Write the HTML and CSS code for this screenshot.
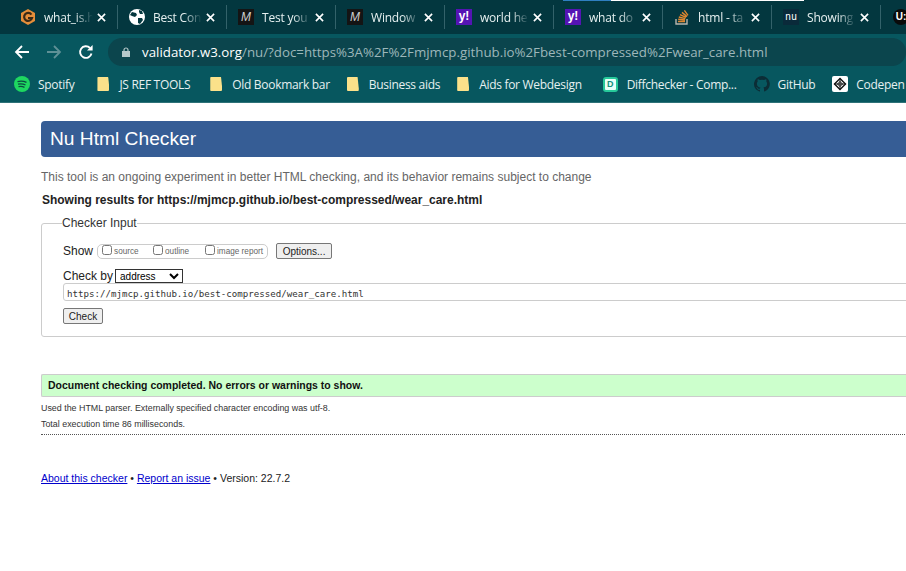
FILE: index.html
```html
<!DOCTYPE html>
<html lang="en">
<head>
  <meta charset="UTF-8">
  <title>Showing results for https://mjmcp.github.io/best-compressed/wear_care.html - Nu Html Checker</title>
  <link rel="stylesheet" href="styles.css">
</head>
<body>
  <header class="chrome">
    <div class="tabs">
      <div class="progress"><span class="progress-blue"></span><span class="progress-white"></span></div>
      <div class="tab">
        <svg class="fav" viewBox="0 0 16 16"><path d="M8 0l7 4v8l-7 4-7-4V4z" fill="#e58e3a"/><path d="M11.400 5.600A4 4 0 1 0 12 9H8" fill="none" stroke="#3a2a16" stroke-width="2.200"/></svg>
        <span class="tab-title">what_is.h</span>
        <svg class="tab-x" viewBox="0 0 10 10"><path d="M1 1l8 8M9 1l-8 8"/></svg>
      </div>
      <div class="tab">
        <svg class="fav" viewBox="0 0 16 16"><circle cx="8" cy="8" r="8" fill="#fff"/><path d="M3 3l4 1 1 2-2 2-3-1-2-1zM9 9l4 0 1 2-3 4-2-1zM10 1l3 1 1 3-3 0-1-2z" fill="#04383f"/></svg>
        <span class="tab-title">Best Con</span>
        <svg class="tab-x" viewBox="0 0 10 10"><path d="M1 1l8 8M9 1l-8 8"/></svg>
      </div>
      <div class="tab">
        <span class="fav fav-m">M</span>
        <span class="tab-title">Test you</span>
        <svg class="tab-x" viewBox="0 0 10 10"><path d="M1 1l8 8M9 1l-8 8"/></svg>
      </div>
      <div class="tab">
        <span class="fav fav-m">M</span>
        <span class="tab-title">Window</span>
        <svg class="tab-x" viewBox="0 0 10 10"><path d="M1 1l8 8M9 1l-8 8"/></svg>
      </div>
      <div class="tab">
        <span class="fav fav-y">y!</span>
        <span class="tab-title">world he</span>
        <svg class="tab-x" viewBox="0 0 10 10"><path d="M1 1l8 8M9 1l-8 8"/></svg>
      </div>
      <div class="tab">
        <span class="fav fav-y">y!</span>
        <span class="tab-title">what do</span>
        <svg class="tab-x" viewBox="0 0 10 10"><path d="M1 1l8 8M9 1l-8 8"/></svg>
      </div>
      <div class="tab">
        <svg class="fav" viewBox="0 0 16 16"><path d="M2 10v5h11v-5" fill="none" stroke="#b8b6ae" stroke-width="1.400"/><path d="M4 12.500h7M4.200 10.300l6.800.7M4.800 8l6.600 1.600M6 5.600l6 2.800M8 3.400l5 4.200M10.400 1.400l3.600 5" fill="none" stroke="#e0872f" stroke-width="1.400"/></svg>
        <span class="tab-title">html - ta</span>
        <svg class="tab-x" viewBox="0 0 10 10"><path d="M1 1l8 8M9 1l-8 8"/></svg>
      </div>
      <div class="tab">
        <span class="fav fav-nu">nu</span>
        <span class="tab-title">Showing</span>
        <svg class="tab-x" viewBox="0 0 10 10"><path d="M1 1l8 8M9 1l-8 8"/></svg>
      </div>
      <div class="tab tab-last">
        <span class="fav fav-u">U:</span>
      </div>
    </div>

    <div class="toolbar">
      <svg class="nav" viewBox="0 0 16 16"><path d="M15 8H2M8 2L2 8l6 6" fill="none" stroke="#fff" stroke-width="1.800"/></svg>
      <svg class="nav" viewBox="0 0 16 16"><path d="M1 8h13M8 2l6 6-6 6" fill="none" stroke="#5f9096" stroke-width="1.800"/></svg>
      <svg class="nav" viewBox="0 0 16 16"><path d="M13.500 9.500A5.800 5.800 0 1 1 12 4" fill="none" stroke="#fff" stroke-width="1.900"/><path d="M9 6.600h5.600V1z" fill="#fff"/></svg>
      <div class="omnibox">
        <svg class="lock" viewBox="0 0 8 10"><path d="M0 4h8v6H0z" fill="#b5c7c9"/><path d="M2 4.500V3a2 2 0 0 1 4 0v1.500" fill="none" stroke="#b5c7c9" stroke-width="1.200"/></svg>
        <span class="url"><b>validator.w3.org</b>/nu/?doc=https%3A%2F%2Fmjmcp.github.io%2Fbest-compressed%2Fwear_care.html</span>
      </div>
    </div>

    <nav class="bookmarks">
      <span class="mark mark-first"><svg class="fav" viewBox="0 0 16 16"><circle cx="8" cy="8" r="8" fill="#1ed760"/><path d="M3.500 5.600c3-.8 6.200-.6 9 .8M4 8.200c2.600-.6 5.200-.4 7.500.8M4.500 10.700c2.100-.5 4.200-.3 6 .7" fill="none" stroke="#0b4a40" stroke-width="1.300"/></svg>Spotify</span>
      <span class="mark mark-js"><span class="folder"></span>JS REF TOOLS</span>
      <span class="mark mark-old"><span class="folder"></span>Old Bookmark bar</span>
      <span class="mark"><span class="folder"></span>Business aids</span>
      <span class="mark"><span class="folder"></span>Aids for Webdesign</span>
      <span class="mark mark-diff"><span class="fav fav-d">D</span>Diffchecker - Comp...</span>
      <span class="mark"><svg class="fav" viewBox="0 0 16 16"><path d="M8 0a8 8 0 0 0-2.500 15.600c.4.100.500-.200.500-.400v-1.400c-2.200.500-2.700-1-2.700-1-.4-.900-.9-1.200-.9-1.200-.7-.500.100-.500.100-.500.800.100 1.200.800 1.200.800.700 1.200 1.900.900 2.300.700.100-.500.300-.900.500-1.100-1.800-.200-3.600-.900-3.600-4 0-.900.300-1.600.800-2.100-.100-.200-.4-1 .100-2.100 0 0 .7-.200 2.200.800a7.600 7.600 0 0 1 4 0c1.500-1 2.200-.800 2.200-.800.400 1.100.200 1.900.100 2.100.500.600.800 1.300.800 2.100 0 3.100-1.900 3.700-3.700 3.900.300.300.600.800.600 1.500v2.200c0 .200.100.500.600.400A8 8 0 0 0 8 0z" fill="#0c2d36"/></svg>GitHub</span>
      <span class="mark"><svg class="fav" viewBox="0 0 16 16"><rect width="16" height="16" rx="2" fill="#fff"/><path d="M8 2.500L13.500 8 8 13.500 2.500 8z" fill="none" stroke="#111" stroke-width="1.400"/><path d="M8 5.500L10.500 8 8 10.500 5.500 8zM2.500 8h11M8 2.500v11" fill="none" stroke="#111" stroke-width="1"/></svg>Codepen</span>
    </nav>
  </header>

  <main class="page">
    <h1 class="title">Nu Html Checker</h1>
    <p class="note">This tool is an ongoing experiment in better HTML checking, and its behavior remains subject to change</p>
    <p class="showing">Showing results for https://mjmcp.github.io/best-compressed/wear_care.html</p>

    <fieldset class="input-box">
      <legend>Checker Input</legend>
      <div class="show-row">
        <span>Show</span>
        <span class="show-opts">
          <label class="opt opt-source"><input type="checkbox">source</label>
          <label class="opt opt-outline"><input type="checkbox">outline</label>
          <label class="opt"><input type="checkbox">image report</label>
        </span>
        <button class="btn btn-options" type="button">Options...</button>
      </div>
      <div class="by-row">
        <span>Check by</span>
        <select class="by-select"><option>address</option></select>
      </div>
      <input class="doc" type="text" value="https://mjmcp.github.io/best-compressed/wear_care.html">
      <button class="btn btn-check" type="button">Check</button>
    </fieldset>

    <p class="success">Document checking completed. No errors or warnings to show.</p>
    <p class="detail">Used the HTML parser. Externally specified character encoding was utf-8.</p>
    <p class="detail">Total execution time 86 milliseconds.</p>
    <hr class="dots">

    <p class="foot"><a href="#">About this checker</a> • <a href="#">Report an issue</a> • Version: 22.7.2</p>
  </main>
</body>
</html>
```

FILE: styles.css
```css
html, body {
  margin: 0;
  padding: 0;
}
body {
  width: 906px;
  height: 571px;
  overflow: hidden;
  background: #fff;
  font-family: "Liberation Sans", Arial, sans-serif;
  color: #222;
}

/* browser top */
.chrome {
  font-family: "Open Sans", sans-serif;
  color: #e6f0f0;
}
.tabs {
  position: relative;
  display: flex;
  height: 34px;
  padding-left: 9px;
  background: #03373f;
  overflow: hidden;
}
.progress {
  position: absolute;
  top: 0;
  left: 563px;
  display: flex;
  height: 1px;
}
.progress-blue {
  width: 48px;
  background: #2f7fc0;
}
.progress-white {
  width: 193px;
  background: #fff;
}
.tab {
  flex: none;
  display: flex;
  align-items: center;
  box-sizing: border-box;
  width: 109px;
  height: 24px;
  margin-top: 5px;
  padding-left: 11px;
  border-right: 1px solid #33626a;
  font-size: 12px;
}
.tab-last {
  width: 26px;
  padding-left: 12px;
  border-right: 0;
}
.tab-title {
  width: 52px;
  margin-left: 8px;
  overflow: hidden;
  letter-spacing: -0.200px;
  white-space: nowrap;
  -webkit-mask-image: linear-gradient(to right, #000 60%, transparent 94%);
  mask-image: linear-gradient(to right, #000 60%, transparent 94%);
}
.tab-x {
  flex: none;
  width: 9px;
  height: 9px;
  margin-left: 1px;
  fill: none;
  stroke: #fff;
  stroke-width: 1.800;
}
.fav {
  flex: none;
  display: block;
  width: 16px;
  height: 16px;
}
.fav-m {
  background: #141414;
  color: #ccc;
  font: italic 400 12px/16px "Liberation Sans", sans-serif;
  text-align: center;
}
.fav-y {
  background: #5514b4;
  color: #fff;
  font: 700 12px/15px "Liberation Sans", sans-serif;
  text-align: center;
}
.fav-nu {
  background: #0a2a3a;
  color: #fff;
  font: 10px/15px "DejaVu Sans Mono", monospace;
  text-align: center;
}
.fav-u {
  width: 16px;
  border-radius: 50%;
  background: #0a0a0a;
  color: #fff;
  font: 700 10px/16px "Liberation Sans", sans-serif;
  text-align: center;
}
.fav-d {
  box-sizing: border-box;
  width: 15px;
  height: 15px;
  border: 2px solid #27c99a;
  border-radius: 3px;
  background: #e8fff8;
  color: #12907a;
  font: 700 9px/11px "Liberation Sans", sans-serif;
  text-align: center;
}

.toolbar {
  display: flex;
  align-items: center;
  height: 36px;
  padding-left: 14px;
  background: #07575f;
}
.nav {
  flex: none;
  width: 16px;
  height: 16px;
  margin-right: 16px;
}
.omnibox {
  display: flex;
  align-items: center;
  width: 860px;
  height: 28px;
  margin-left: -2px;
  padding-left: 14px;
  border-radius: 14px;
  background: #0b454d;
}
.lock {
  width: 8px;
  height: 10px;
  margin-right: 12px;
}
.url {
  font-size: 13.300px;
  white-space: nowrap;
  color: #9db7ba;
}
.url b {
  font-weight: 400;
  color: #fff;
}

.bookmarks {
  display: flex;
  align-items: center;
  height: 28px;
  padding: 0 0 4px 14px;
  border-bottom: 1px solid #2e7278;
  background: #07575f;
  font-size: 12px;
  letter-spacing: -0.300px;
  white-space: nowrap;
  overflow: hidden;
}
.mark {
  display: flex;
  flex: none;
  align-items: center;
  margin-left: 17px;
}
.mark-first {
  margin-left: 0;
}
.mark-js {
  margin-left: 23px;
}
.mark-old {
  margin-left: 20px;
}
.mark-diff {
  margin-left: 21px;
}
.mark .fav {
  margin-right: 8px;
}
.mark .fav-d {
  margin-right: 9px;
}
.folder {
  flex: none;
  width: 12px;
  height: 14px;
  margin-right: 10px;
  border-radius: 1px;
  background: #fbe18a;
  clip-path: polygon(0 0, 90% 0, 100% 82%, 100% 100%, 0 100%);
}

/* checker page */
.page {
  width: 960px;
  padding: 18px 0 0 41px;
  font-size: 12px;
}
.title {
  height: 36px;
  margin: 0;
  padding-left: 9px;
  border-radius: 4px 0 0 4px;
  background: #365d95;
  color: #fff;
  font-size: 19.200px;
  font-weight: 400;
  line-height: 36px;
}
.note {
  margin: 13px 0 0;
  color: #666;
  line-height: 14px;
}
.showing {
  margin: 9px 0 0 1px;
  font-size: 11.970px;
  font-weight: 700;
  line-height: 14px;
}
.input-box {
  box-sizing: border-box;
  height: 121px;
  margin: 9px 0 0;
  padding: 13px 0 0 21px;
  border: 1px solid #ccc;
  border-radius: 3px;
}
.input-box legend {
  padding: 0;
  margin-left: -1px;
  color: #333;
  line-height: 14px;
}
.show-row {
  display: flex;
  align-items: center;
  height: 16px;
}
.show-opts {
  display: flex;
  align-items: center;
  box-sizing: border-box;
  width: 171px;
  height: 15px;
  margin-left: 4px;
  padding-left: 4px;
  border: 1px solid #ccc;
  border-radius: 5px;
  color: #666;
  font-size: 8.200px;
}
.opt {
  display: flex;
  align-items: center;
}
.opt input {
  width: 10px;
  height: 10px;
  margin: 0 2px 2px 0;
}
.opt-source {
  width: 51px;
}
.opt-outline {
  width: 52px;
}
.btn {
  box-sizing: border-box;
  height: 16px;
  padding: 0;
  border: 1px solid #777;
  border-radius: 2px;
  background: #efefef;
  color: #222;
  font-family: "Liberation Sans", sans-serif;
  font-size: 10px;
}
.btn-options {
  width: 56px;
  margin-left: 8px;
}
.by-row {
  display: flex;
  align-items: center;
  height: 14px;
  margin-top: 10px;
}
.by-select {
  box-sizing: border-box;
  width: 68px;
  height: 14px;
  margin-left: 2px;
  padding: 0;
  border: 1px solid #333;
  border-radius: 0;
  background: #fff;
  font-family: "Liberation Sans", sans-serif;
  font-size: 10px;
}
.doc {
  display: block;
  box-sizing: border-box;
  width: 900px;
  height: 18px;
  margin: 0;
  padding: 3px 3px 0;
  border: 1px solid #ccc;
  border-radius: 3px;
  color: #333;
  font-family: "DejaVu Sans Mono", monospace;
  font-size: 9.130px;
}
.btn-check {
  display: block;
  width: 40px;
  margin-top: 7px;
}
.success {
  box-sizing: border-box;
  height: 23px;
  margin: 37px 0 0;
  padding-left: 6px;
  border-top: 1px solid #ccc;
  border-bottom: 1px solid #ccc;
  border-left: 1px solid #ccc;
  border-radius: 2px 0 0 2px;
  background: #ccffcc;
  color: #111;
  font-size: 10.470px;
  font-weight: 700;
  line-height: 22px;
}
.detail {
  margin: 6px 0 0;
  color: #333;
  font-size: 8.900px;
  line-height: 11px;
}
.detail + .detail {
  margin-top: 5px;
}
.dots {
  width: 864px;
  height: 0;
  margin: 4px 0 0;
  border: 0;
  border-top: 1px dotted #555;
}
.foot {
  margin: 36px 0 0;
  font-size: 10.500px;
  line-height: 14px;
}
.foot a {
  color: #00c;
}
```
